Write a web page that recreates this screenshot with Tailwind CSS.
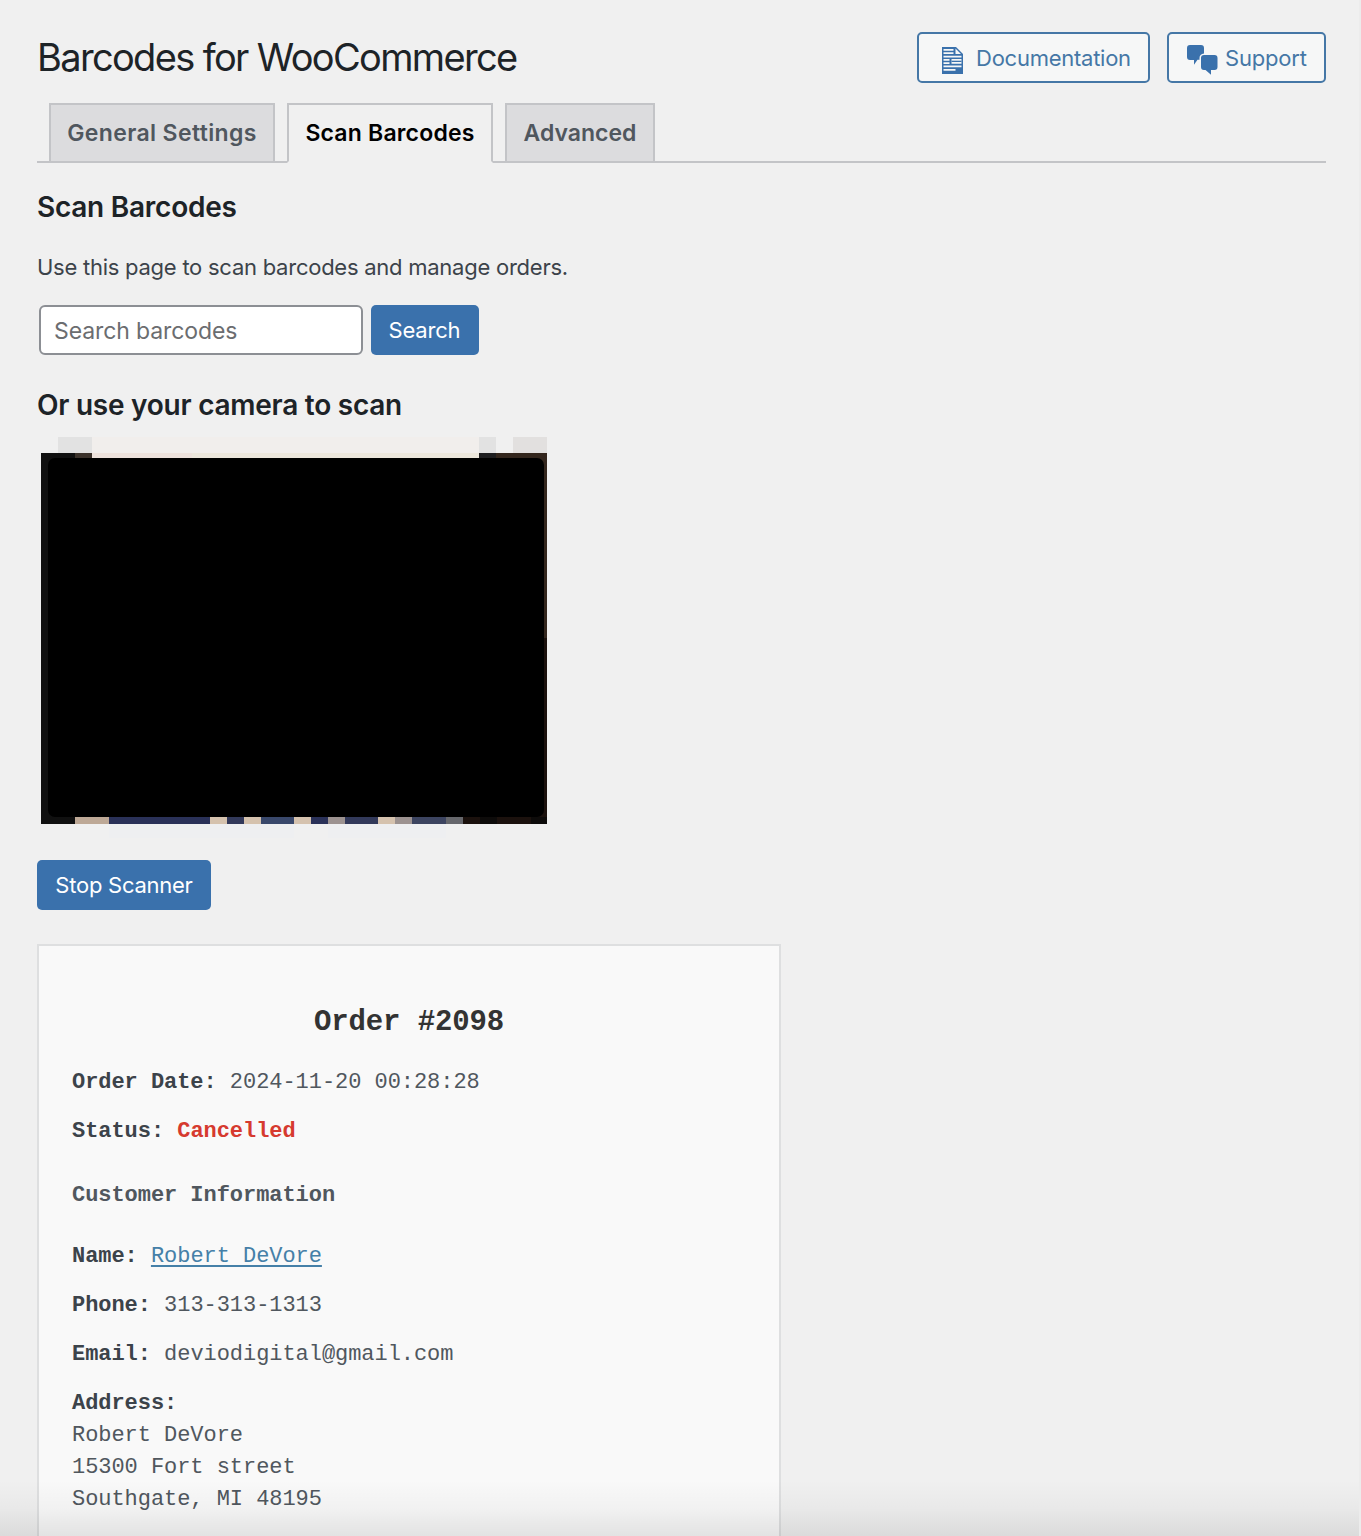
<!DOCTYPE html>
<html lang="en">
<head>
<meta charset="utf-8">
<title>Barcodes for WooCommerce</title>
<script src="https://cdn.jsdelivr.net/npm/@tailwindcss/browser@4"></script>
</head>
<body class="bg-[#f0f0f0] font-['Inter',sans-serif] text-[#3c434a]">
<div class="relative h-[1536px] overflow-hidden border-r-2 border-[#ececec] pl-[37px] pr-[33px]">
  <header class="flex h-[103px] items-start justify-between pt-8">
    <h1 class="text-[38px] leading-[50px] tracking-[-1.65px] text-[#1d2327] whitespace-nowrap">Barcodes for WooCommerce</h1>
    <div class="flex gap-[17px]">
      <a class="flex h-[51px] w-[233px] items-center rounded-[5px] border-2 border-[#4577a6] bg-[#f6f7f7] pl-[23px] text-[22px] tracking-[-0.25px] text-[#4577a6]">
        <svg class="mt-1.5 mr-[13px] h-[27px] w-[21px] shrink-0" viewBox="0 0 21 27"><path fill="#3a71ac" d="M0 0H14L21 7V27H0Z"/><path fill="#f6f7f7" d="M1.500 2h10v1.700h-10zM1.500 5.300h10V7h-10zM13.500 1.500l5.500 5.500h-5.500zM1.500 8.700h18v1.700h-18zM1.500 12h6v1.700h-6zM9.500 12h10v4.800h-10zM1.500 15.300h6V17h-6zM1.500 18.600h18v1.700h-18zM1.500 22h12v1.700h-12z"/><path fill="#3a71ac" d="M9.500 13.700h10v1.300h-10z"/></svg>
        <span class="pt-px whitespace-nowrap">Documentation</span>
      </a>
      <a class="flex h-[51px] w-[159px] items-center rounded-[5px] border-2 border-[#4577a6] bg-[#f6f7f7] pl-[18px] text-[22px] tracking-[-0.2px] text-[#4577a6]">
        <svg class="mt-1 mr-[7px] h-[30px] w-[31px] shrink-0" viewBox="0 0 31 30"><path fill="#3a71ac" d="M3 0H14Q17 0 17 3V8.500Q12.500 9 12.500 13V14.800H10.500L7 19.800V15H3Q0 15 0 12V3Q0 0 3 0ZM17 10H27.500Q30.500 10 30.500 13V22Q30.500 25 27.500 25H24V29.800L18.500 25H17Q14 25 14 22V13Q14 10 17 10Z"/></svg>
        <span class="pt-px whitespace-nowrap">Support</span>
      </a>
    </div>
  </header>
  <nav class="flex h-[60px] items-start gap-3 border-b-2 border-[#c3c4c7] pl-3 text-[23px] font-semibold leading-[57px] whitespace-nowrap">
    <a class="h-[60px] w-[226px] border-2 border-[#c3c4c7] bg-[#dcdcde] text-center tracking-[0.37px] text-[#50575e]">General Settings</a>
    <a class="h-[60px] w-[206px] border-2 border-b-[#f0f0f0] border-[#c3c4c7] bg-[#f0f0f0] text-center tracking-[0.2px] text-black">Scan Barcodes</a>
    <a class="h-[60px] w-[150px] border-2 border-[#c3c4c7] bg-[#dcdcde] text-center text-[#50575e]">Advanced</a>
  </nav>
  <h2 class="mt-[24px] text-[28px] font-semibold leading-10 tracking-[-0.25px] text-[#1d2327]">Scan Barcodes</h2>
  <p class="mt-[24px] text-[22px] leading-8 tracking-[-0.25px]">Use this page to scan barcodes and manage orders.</p>
  <form class="mt-[22px] flex pl-[2px]">
    <input class="h-[50px] w-[324px] rounded-[6px] border-2 border-[#8c8f94] bg-white px-[13px] pt-[2px] text-[23px] tracking-[-0.1px] placeholder:text-[#6b6d70]" placeholder="Search barcodes">
    <button type="button" class="ml-[7.500px] h-[50px] w-[108px] rounded-[5px] bg-[#3a71ac] pt-px text-[22px] tracking-[-0.2px] text-white">Search</button>
  </form>
  <h2 class="mt-[30px] text-[28px] font-semibold leading-10 tracking-[-0.25px] text-[#1d2327]">Or use your camera to scan</h2>
  <svg class="ml-1 mt-[11px] block" width="506" height="402" viewBox="0 0 506 402" shape-rendering="crispEdges">
    <path fill="#e2e2e2" d="M17 1h34v16H17zM438 1h17v16h-17z"/>
    <path fill="#e2e0df" d="M472 1h34v16h-34z"/>
    <path fill="#f1eeec" d="M51 1h387v16H51z"/>
    <path fill="#101010" d="M0 17h506v371H0z"/>
    <path fill="#3b322b" d="M34 17h17v5H34z"/>
    <path fill="#1e1e20" d="M438 17h17v5h-17z"/>
    <path fill="#33261d" d="M455 17h51v5h-51zM496 22h10v180h-10z"/>
    <path fill="#1b110d" d="M496 202h10v186h-10zM422 381h84v7h-84z"/>
    <path fill="#0d0b0a" d="M439 381h17v7h-17zM490 381h16v7h-16z"/>
    <rect x="7" y="22" width="496" height="359" rx="7" fill="#000" shape-rendering="auto"/>
    <path fill="#ede2dc" d="M51 17h100v5H51z"/>
    <path fill="#ece7dc" d="M151 17h287v5H151z"/>
    <path fill="#bda896" d="M34 381h34v7H34z"/>
    <path fill="#2a3158" d="M68 381h101v7H68zM270 381h17v7h-17z"/>
    <path fill="#d5c2ae" d="M169 381h17v7h-17zM203 381h17v7h-17zM253 381h17v7h-17zM337 381h17v7h-17z"/>
    <path fill="#32395a" d="M186 381h17v7h-17zM304 381h33v7h-33z"/>
    <path fill="#39486b" d="M220 381h33v7h-33z"/>
    <path fill="#3c4460" d="M371 381h34v7h-34z"/>
    <path fill="#9c9290" d="M287 381h17v7h-17zM354 381h17v7h-17z"/>
    <path fill="#66676c" d="M405 381h17v7h-17z"/>
    <path fill="#eceef1" d="M68 388h185v14H68zM287 388h118v14H287z" opacity=".6"/>
  </svg>
  <button type="button" class="mt-[22px] block h-[50px] w-[174px] rounded-[5px] bg-[#3a71ac] pt-px text-[22px] tracking-[-0.25px] text-white">Stop Scanner</button>
  <section class="mt-[34px] h-[640px] w-[744px] border-2 border-[#dedfe0] bg-[#f9f9f9] px-[33px] pt-[57px] font-['Liberation_Mono',monospace] text-[22px] leading-8 tracking-[-0.05px] text-[#50575e]">
    <h2 class="text-center text-[29px] font-bold leading-[40px] tracking-[-0.15px] text-[#333]">Order #2098</h2>
    <p class="mt-[24px]"><b class="text-[#3c434a]">Order Date:</b> 2024-11-20 00:28:28</p>
    <p class="mt-[17px]"><b class="text-[#3c434a]">Status:</b> <b class="text-[#d63a2f]">Cancelled</b></p>
    <h3 class="mt-[32px] font-bold text-[#50575e]">Customer Information</h3>
    <p class="mt-[29px]"><b class="text-[#3c434a]">Name:</b> <a class="text-[#4580a8] underline decoration-2 underline-offset-[3px]">Robert DeVore</a></p>
    <p class="mt-[17px]"><b class="text-[#3c434a]">Phone:</b> 313-313-1313</p>
    <p class="mt-[17px]"><b class="text-[#3c434a]">Email:</b> deviodigital@gmail.com</p>
    <p class="mt-[17px]"><b class="text-[#3c434a]">Address:</b><br>Robert DeVore<br>15300 Fort street<br>Southgate, MI 48195</p>
  </section>
  <div class="absolute inset-x-0 bottom-0 h-14 bg-linear-to-b from-black/0 via-black/3 to-black/9"></div>
</div>
</body>
</html>
